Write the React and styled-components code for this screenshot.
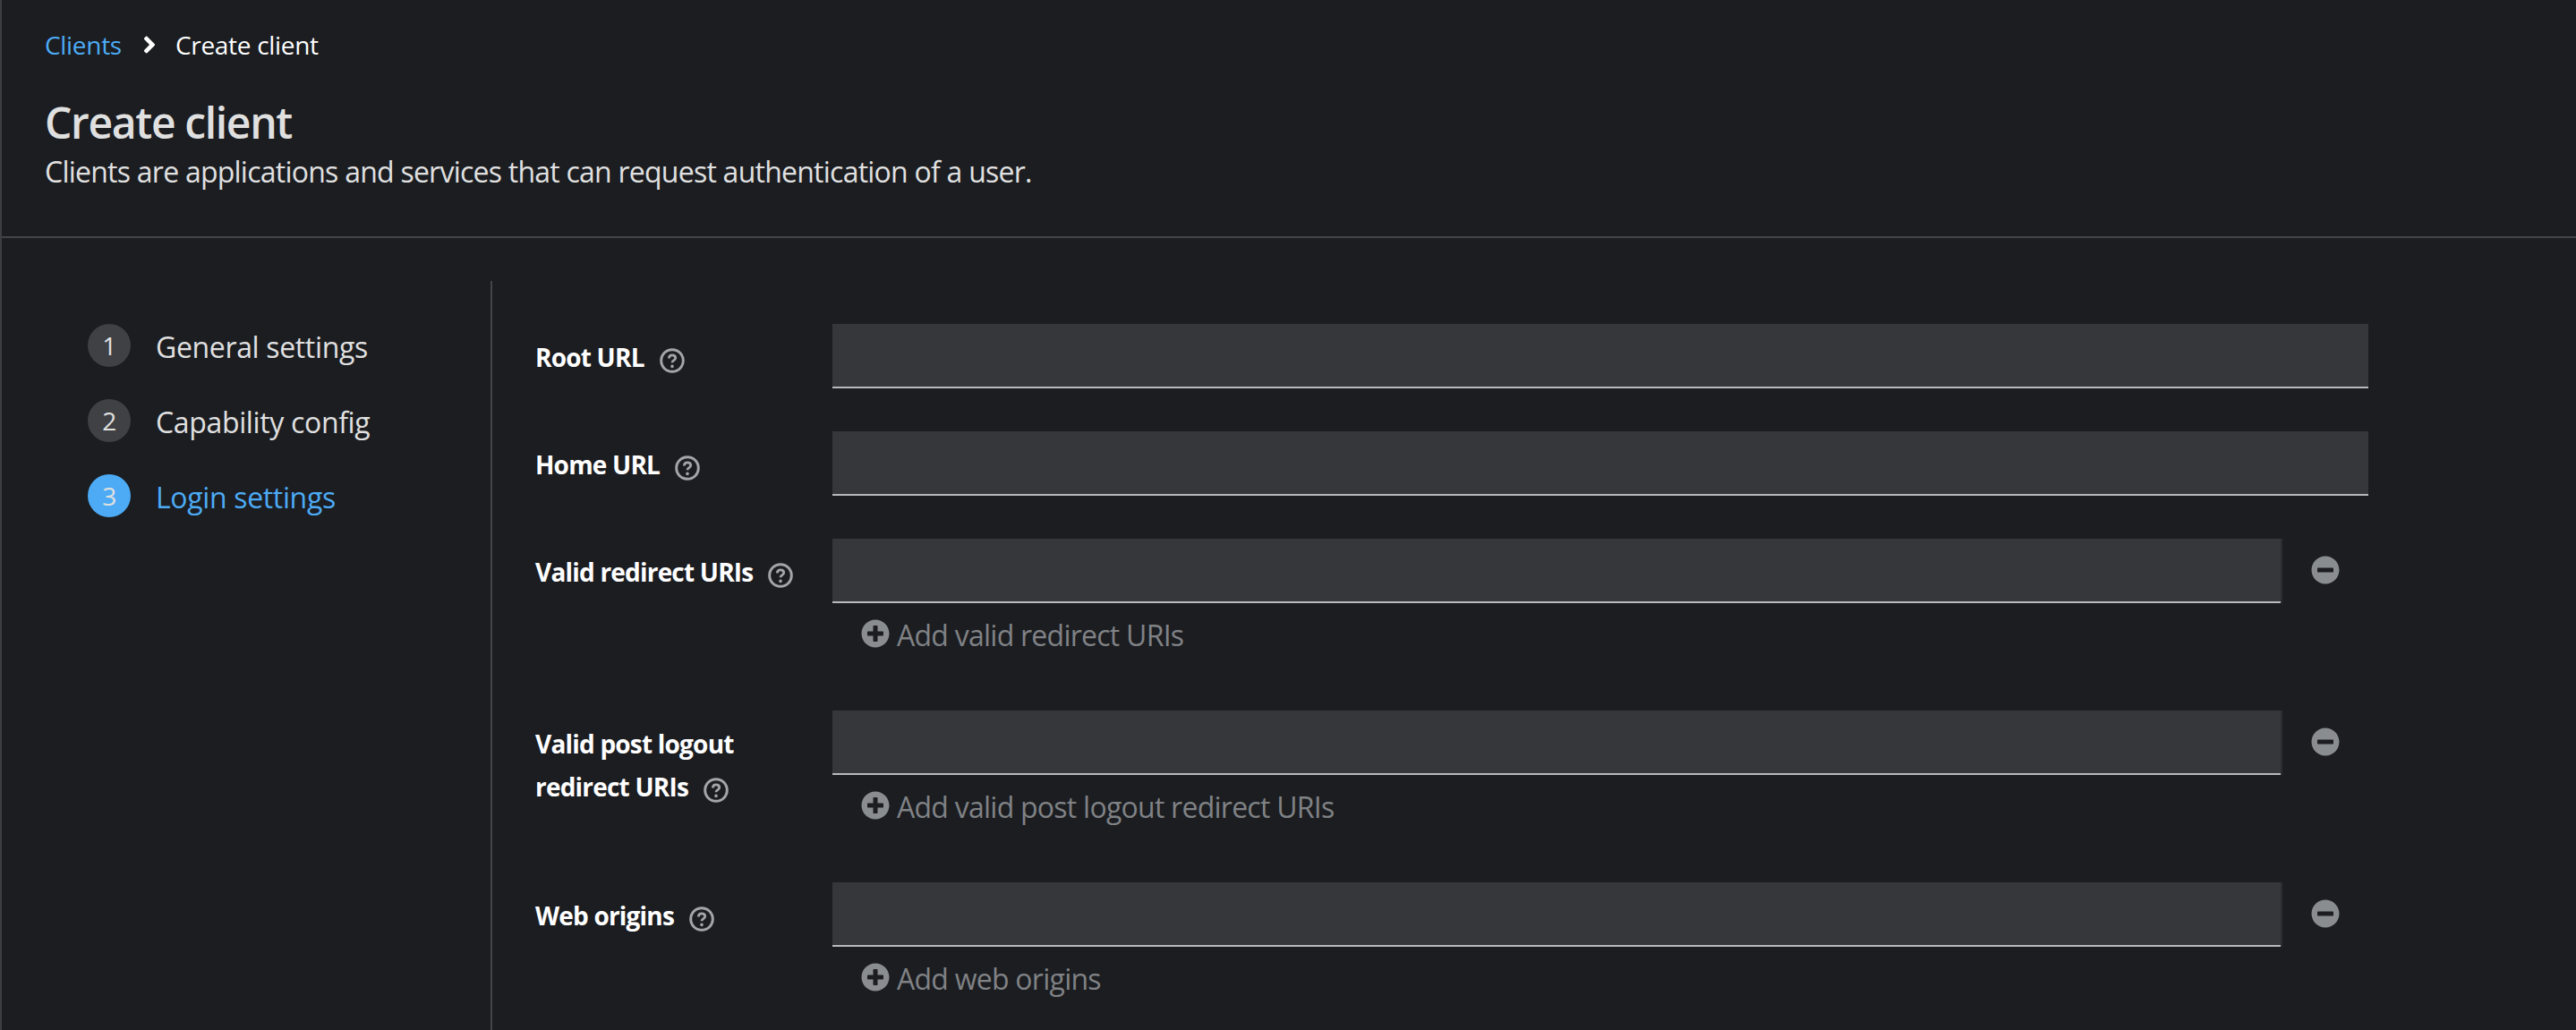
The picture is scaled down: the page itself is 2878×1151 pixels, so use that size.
import React from "react";
import styled, { createGlobalStyle } from "styled-components";
import { FaAngleRight, FaMinusCircle, FaPlusCircle } from "react-icons/fa";

const FONT = '"Open Sans", "Noto Sans", sans-serif';

const Global = createGlobalStyle`
  html, body { margin: 0; padding: 0; height: 100%; background: #1b1d21; overflow: hidden; }
  #root { height: 100%; }
  * { box-sizing: border-box; }
`;

const Page = styled.div`
  height: 1151px;
  display: flex;
  flex-direction: column;
  background: #1b1d21;
  border-left: 2px solid #3c3e42;
  font-family: ${FONT};
  color: #e0e0e0;
  overflow: hidden;
`;

const Header = styled.header`
  padding: 30px 48px 48px;
  border-bottom: 2px solid #444548;
`;

const Breadcrumb = styled.nav`
  display: flex;
  align-items: center;
  height: 40px;
  font-size: 28px;
  letter-spacing: -0.3px;
  color: #fff;
  margin-bottom: 37px;
`;

const Crumb = styled.a`
  color: #4dabf5;
  text-decoration: none;
`;

const Chevron = styled.span`
  display: inline-flex;
  width: 60px;
  padding-left: 2px;
  justify-content: center;
  font-size: 30px;
  color: #fff;
`;

const Title = styled.h1`
  margin: 0 0 1px;
  font-size: 48px;
  line-height: 60px;
  font-weight: 600;
  letter-spacing: -1.35px;
  color: #e0e0e0;
`;

const Subtitle = styled.p`
  margin: 0;
  font-size: 32px;
  line-height: 48px;
  letter-spacing: -0.76px;
  color: #e0e0e0;
`;

const Body = styled.div`
  flex: 1;
  display: flex;
  margin-top: 48px;
  min-height: 0;
`;

const Steps = styled.ol`
  flex: 0 0 548px;
  margin: 0;
  padding: 48px 0 0 96px;
  list-style: none;
  border-right: 2px solid #444548;
  display: flex;
  flex-direction: column;
  gap: 36px;
`;

const Step = styled.li`
  display: flex;
  align-items: center;
  gap: 28px;
  height: 48px;
  font-size: 32px;
  letter-spacing: -0.35px;
  color: ${(p) => (p.$active ? "#4dabf5" : "#e0e0e0")};
`;

const StepNumber = styled.span`
  flex: none;
  width: 48px;
  height: 48px;
  border-radius: 50%;
  display: flex;
  align-items: center;
  justify-content: center;
  font-size: 28px;
  background: ${(p) => (p.$active ? "#4dabf5" : "#3f4145")};
  color: #e0e0e0;
`;

const StepText = styled.span`
  padding-top: 2px;
`;

const Form = styled.form`
  flex: 1;
  padding: 48px 0 0 48px;
  display: flex;
  flex-direction: column;
  gap: 48px;
`;

const Row = styled.div`
  display: flex;
  align-items: flex-start;
`;

const Label = styled.label`
  flex: 0 0 332px;
  padding-top: 13px;
  padding-right: 24px;
  font-size: 28px;
  line-height: 48px;
  font-weight: 700;
  letter-spacing: -0.8px;
  color: #fff;
`;

const Help = styled.svg`
  display: inline-block;
  width: 28px;
  height: 28px;
  margin-left: 17px;
  vertical-align: -7px;
  color: #a3a5a8;
`;

const Field = styled.div`
  flex: 0 0 1716px;
`;

const InputLine = styled.div`
  display: flex;
  align-items: center;
`;

const Input = styled.input`
  flex: 1;
  min-width: 0;
  height: 72px;
  border: 0;
  border-bottom: 2px solid #b8bbbe;
  border-radius: 0;
  outline: 0;
  background: #36373b;
  padding: 0 16px;
  font: inherit;
  color: #e0e0e0;
`;

const Remove = styled.button`
  flex: 0 0 98px;
  height: 72px;
  padding: 0 0 2px;
  border: 0;
  border-left: 2px solid #2b2d31;
  background: none;
  display: flex;
  align-items: center;
  justify-content: center;
  font-size: 32px;
  color: #8a8d90;
`;

const Add = styled.button`
  display: flex;
  align-items: center;
  gap: 8px;
  height: 68px;
  margin-bottom: 4px;
  padding: 0 0 0 32px;
  border: 0;
  background: none;
  font-family: ${FONT};
  font-size: 32px;
  letter-spacing: -0.75px;
  color: #808285;
  svg { font-size: 32px; color: #8a8d90; }
  span { padding-top: 2px; }
`;

const HelpIcon = () => (
  <Help viewBox="0 0 28 28" fill="none">
    <circle cx="14" cy="14" r="12.3" stroke="currentColor" strokeWidth="3" />
    <path d="M10.4 11.4c0-2.1 1.6-3.5 3.7-3.5s3.6 1.3 3.6 3.1c0 2.7-3.7 2.5-3.7 5.2" stroke="currentColor" strokeWidth="2.8" />
    <circle cx="14" cy="20.4" r="1.8" fill="currentColor" />
  </Help>
);

const steps = ["General settings", "Capability config", "Login settings"];

const fields = [
  { label: "Root URL" },
  { label: "Home URL" },
  { label: "Valid redirect URIs", add: "Add valid redirect URIs" },
  { label: "Valid post logout redirect URIs", add: "Add valid post logout redirect URIs" },
  { label: "Web origins", add: "Add web origins" },
];

export default function App() {
  return (
    <Page>
      <Global />
      <Header>
        <Breadcrumb>
          <Crumb href="#">Clients</Crumb>
          <Chevron><FaAngleRight /></Chevron>
          <span>Create client</span>
        </Breadcrumb>
        <Title>Create client</Title>
        <Subtitle>Clients are applications and services that can request authentication of a user.</Subtitle>
      </Header>
      <Body>
        <Steps>
          {steps.map((s, i) => (
            <Step key={s} $active={i === 2}>
              <StepNumber $active={i === 2}>{i + 1}</StepNumber>
              <StepText>{s}</StepText>
            </Step>
          ))}
        </Steps>
        <Form>
          {fields.map((f) => (
            <Row key={f.label}>
              <Label>
                {f.label}
                <HelpIcon />
              </Label>
              <Field>
                <InputLine>
                  <Input />
                  {f.add && <Remove type="button"><FaMinusCircle /></Remove>}
                </InputLine>
                {f.add && <Add type="button"><FaPlusCircle /><span>{f.add}</span></Add>}
              </Field>
            </Row>
          ))}
        </Form>
      </Body>
    </Page>
  );
}
